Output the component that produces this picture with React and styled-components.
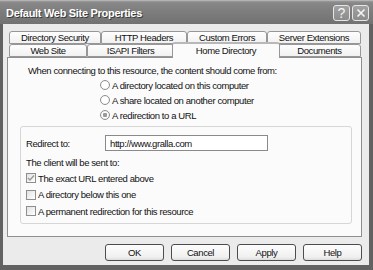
import React from "react";
import styled, { createGlobalStyle } from "styled-components";

const GlobalStyle = createGlobalStyle`
  html, body {
    margin: 0;
    padding: 0;
    background: #5e5e5e;
  }
  body {
    font-family: "Liberation Sans", Arial, sans-serif;
    font-size: 9.5px;
    letter-spacing: -0.4px;
    color: #111;
  }
`;

const tabRows = [
  [
    { label: "Directory Security", width: 92 },
    { label: "HTTP Headers", width: 86 },
    { label: "Custom Errors", width: 80 },
    { label: "Server Extensions", width: 94 },
  ],
  [
    { label: "Web Site", width: 78 },
    { label: "ISAPI Filters", width: 87 },
    { label: "Home Directory", width: 104, active: true },
    { label: "Documents", width: 83 },
  ],
];

const sources = [
  { label: "A directory located on this computer" },
  { label: "A share located on another computer" },
  { label: "A redirection to a URL", selected: true },
];

const options = [
  { label: "The exact URL entered above", checked: true },
  { label: "A directory below this one" },
  { label: "A permanent redirection for this resource" },
];

const Window = styled.div`
  width: 373px;
  height: 270px;
  display: flex;
  flex-direction: column;
  background: #626262;
  box-sizing: border-box;
`;

const TitleBar = styled.div`
  height: 24px;
  flex: none;
  display: flex;
  align-items: center;
  padding: 0 4px 0 6px;
  background: linear-gradient(#9a9a9a 0, #878787 2px, #7c7c7c 50%, #727272 100%);
  border-top: 1px solid #b4b4b4;
  box-sizing: border-box;
`;

const Title = styled.div`
  flex: 1;
  color: #fff;
  font-weight: bold;
  font-size: 11px;
  letter-spacing: -0.3px;
  text-shadow: 1px 1px 0 #3c3c3c;
`;

const CaptionButton = styled.div`
  width: 17px;
  height: 16px;
  margin-left: 2px;
  border: 1px solid #e6e6e6;
  border-radius: 3px;
  box-sizing: border-box;
  background: linear-gradient(#a2a2a2, #8c8c8c);
  display: flex;
  align-items: center;
  justify-content: center;
  color: #f4f4f4;
  font-size: 14px;
  letter-spacing: 0;
`;

const Client = styled.div`
  flex: 1;
  margin: 0 4px 5px 3px;
  background: #ebebeb;
  padding: 7px 7px 0 4px;
  display: flex;
  flex-direction: column;
`;

const TabStrip = styled.div`
  display: flex;
  flex-direction: column;
  padding-left: 2px;
`;

const TabRow = styled.div`
  display: flex;
  height: 13px;
  align-items: flex-end;
`;

const Tab = styled.div`
  position: relative;
  box-sizing: border-box;
  width: ${(p) => p.$width + (p.$active ? 4 : 0)}px;
  height: ${(p) => (p.$active ? 16 : 13)}px;
  margin: ${(p) => (p.$active ? "0 -2px -1px" : "0")};
  z-index: ${(p) => (p.$active ? 2 : 0)};
  border: 1px solid #979797;
  border-bottom: ${(p) => (p.$active ? "none" : "1px solid #979797")};
  border-top: ${(p) => (p.$active ? "2px solid #b8b8b8" : "1px solid #979797")};
  border-radius: 3px 3px 0 0;
  background: ${(p) => (p.$active ? "#fbfbfb" : "linear-gradient(#fefefe, #f1f1f1)")};
  display: flex;
  align-items: center;
  justify-content: center;
  line-height: 1;
  white-space: nowrap;
`;

const Panel = styled.div`
  height: 180px;
  box-sizing: border-box;
  border: 1px solid #8f8f8f;
  background: #fbfbfb;
  padding: 6px 9px 0 12px;
  display: flex;
  flex-direction: column;
`;

const Lead = styled.div`
  padding-left: 8px;
  height: 14px;
  line-height: 14px;
`;

const RadioList = styled.div`
  display: flex;
  flex-direction: column;
  gap: 3px;
  padding: 1px 0 0 80px;
`;

const Choice = styled.label`
  display: flex;
  align-items: center;
  height: 12px;
  gap: 2px;
  white-space: nowrap;
`;

const RadioDot = styled.span`
  width: 10px;
  height: 10px;
  border-radius: 50%;
  border: 1px solid #8e8e8e;
  background: ${(p) =>
    p.$on
      ? "radial-gradient(circle, #9a9a9a 0 2px, #fff 2.5px, #e4e4e4 100%)"
      : "radial-gradient(circle, #fff 0 3px, #e4e4e4 100%)"};
  box-sizing: border-box;
  flex: none;
`;

const Group = styled.div`
  margin-top: 5px;
  height: 98px;
  box-sizing: border-box;
  border: 1px solid #d6d6d6;
  border-radius: 3px;
  padding: 8px 0 0 5px;
  display: flex;
  flex-direction: column;
`;

const RedirectRow = styled.div`
  display: flex;
  align-items: center;
  height: 16px;
`;

const FieldLabel = styled.span`
  width: 79px;
  flex: none;
`;

const TextBox = styled.div`
  width: 163px;
  height: 16px;
  box-sizing: border-box;
  border: 1px solid #8a8a8a;
  background: #fff;
  padding-left: 4px;
  display: flex;
  align-items: center;
`;

const SentTo = styled.div`
  margin-top: 5px;
  height: 13px;
  line-height: 13px;
`;

const CheckList = styled.div`
  display: flex;
  flex-direction: column;
  gap: 4.5px;
  margin-top: 3px;
`;

const CheckBox = styled.span`
  width: 10px;
  height: 10px;
  box-sizing: border-box;
  border: 1px solid #8e8e8e;
  background: linear-gradient(135deg, #e2e2e2, #fff);
  display: flex;
  align-items: center;
  justify-content: center;
  flex: none;
`;

const Buttons = styled.div`
  display: flex;
  justify-content: flex-end;
  gap: 7px;
  margin-top: 7px;
`;

const Button = styled.div`
  width: 59px;
  height: 17px;
  box-sizing: border-box;
  border: 1px solid #4c4c4c;
  border-radius: 3px;
  background: linear-gradient(#fdfdfd, #f0f0f0 80%, #dcdcdc);
  display: flex;
  align-items: center;
  justify-content: center;
`;

const Check = () => (
  <svg width="8" height="8" viewBox="0 0 8 8">
    <path d="M1 4 L3 6 L7 1.5" fill="none" stroke="#9a9a9a" strokeWidth="1.5" />
  </svg>
);

const App = () => {
  return (
    <>
      <GlobalStyle />
      <Window>
        <TitleBar>
          <Title>Default Web Site Properties</Title>
          <CaptionButton>?</CaptionButton>
          <CaptionButton>
            <svg width="10" height="10" viewBox="0 0 10 10">
              <path d="M1.5 1.5 L8.5 8.5 M8.5 1.5 L1.5 8.5" stroke="#f4f4f4" strokeWidth="1.6" />
            </svg>
          </CaptionButton>
        </TitleBar>
        <Client>
          <TabStrip>
            {tabRows.map((row, r) => (
              <TabRow key={r}>
                {row.map((tab) => (
                  <Tab key={tab.label} $width={tab.width} $active={tab.active}>
                    {tab.label}
                  </Tab>
                ))}
              </TabRow>
            ))}
          </TabStrip>
          <Panel>
            <Lead>When connecting to this resource, the content should come from:</Lead>
            <RadioList>
              {sources.map((s) => (
                <Choice key={s.label}>
                  <RadioDot $on={s.selected} />
                  {s.label}
                </Choice>
              ))}
            </RadioList>
            <Group>
              <RedirectRow>
                <FieldLabel>Redirect to:</FieldLabel>
                <TextBox>http://www.gralla.com</TextBox>
              </RedirectRow>
              <SentTo>The client will be sent to:</SentTo>
              <CheckList>
                {options.map((o) => (
                  <Choice key={o.label}>
                    <CheckBox>{o.checked && <Check />}</CheckBox>
                    {o.label}
                  </Choice>
                ))}
              </CheckList>
            </Group>
          </Panel>
          <Buttons>
            <Button>OK</Button>
            <Button>Cancel</Button>
            <Button>Apply</Button>
            <Button>Help</Button>
          </Buttons>
        </Client>
      </Window>
    </>
  );
};

export default App;
